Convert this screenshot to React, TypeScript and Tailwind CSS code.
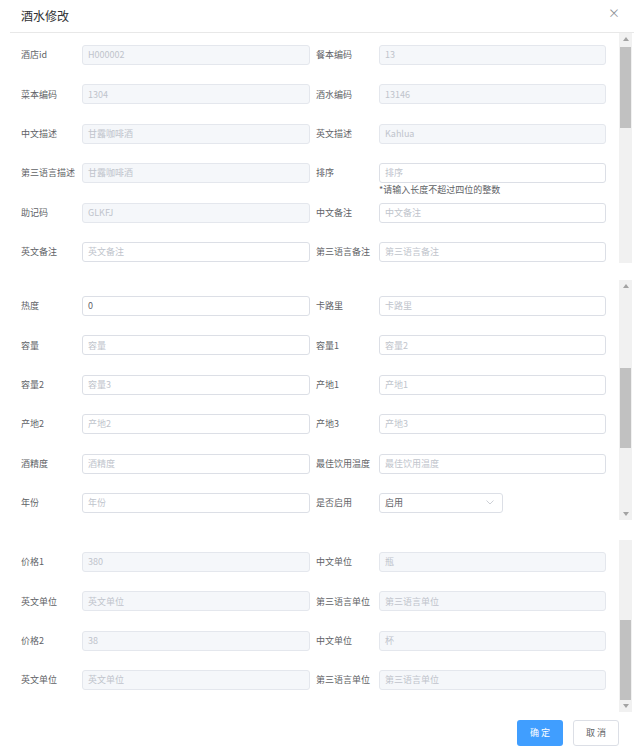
import React from 'react';

type Field = {
  label: string;
  value?: string;
  placeholder?: string;
  disabled?: boolean;
  hint?: string;
  select?: boolean;
};

const font = { fontFamily: '"Noto Sans CJK SC", "Noto Sans", sans-serif' };

const section1: [Field, Field][] = [
  [
    { label: '酒店id', value: 'H000002', disabled: true },
    { label: '餐本编码', value: '13', disabled: true },
  ],
  [
    { label: '菜本编码', value: '1304', disabled: true },
    { label: '酒水编码', value: '13146', disabled: true },
  ],
  [
    { label: '中文描述', value: '甘露咖啡酒', disabled: true },
    { label: '英文描述', value: 'Kahlua', disabled: true },
  ],
  [
    { label: '第三语言描述', value: '甘露咖啡酒', disabled: true },
    { label: '排序', placeholder: '排序', hint: '*请输入长度不超过四位的整数' },
  ],
  [
    { label: '助记码', value: 'GLKFJ', disabled: true },
    { label: '中文备注', placeholder: '中文备注' },
  ],
  [
    { label: '英文备注', placeholder: '英文备注' },
    { label: '第三语言备注', placeholder: '第三语言备注' },
  ],
];

const section2: [Field, Field][] = [
  [
    { label: '热度', value: '0' },
    { label: '卡路里', placeholder: '卡路里' },
  ],
  [
    { label: '容量', placeholder: '容量' },
    { label: '容量1', placeholder: '容量2' },
  ],
  [
    { label: '容量2', placeholder: '容量3' },
    { label: '产地1', placeholder: '产地1' },
  ],
  [
    { label: '产地2', placeholder: '产地2' },
    { label: '产地3', placeholder: '产地3' },
  ],
  [
    { label: '酒精度', placeholder: '酒精度' },
    { label: '最佳饮用温度', placeholder: '最佳饮用温度' },
  ],
  [
    { label: '年份', placeholder: '年份' },
    { label: '是否启用', value: '启用', select: true },
  ],
];

const section3: [Field, Field][] = [
  [
    { label: '价格1', value: '380', disabled: true },
    { label: '中文单位', value: '瓶', disabled: true },
  ],
  [
    { label: '英文单位', placeholder: '英文单位', disabled: true },
    { label: '第三语言单位', placeholder: '第三语言单位', disabled: true },
  ],
  [
    { label: '价格2', value: '38', disabled: true },
    { label: '中文单位', value: '杯', disabled: true },
  ],
  [
    { label: '英文单位', placeholder: '英文单位', disabled: true },
    { label: '第三语言单位', placeholder: '第三语言单位', disabled: true },
  ],
];

const Arrow = ({ down }: { down?: boolean }) => (
  <div className="h-[12px] flex items-center justify-center">
    <svg width="6" height="4" viewBox="0 0 6 4">
      {down ? <polygon points="0,0 6,0 3,4" fill="#a3a3a3" /> : <polygon points="0,4 6,4 3,0" fill="#a3a3a3" />}
    </svg>
  </div>
);

const Input = ({ f, wide }: { f: Field; wide?: boolean }) => {
  if (f.select) {
    return (
      <div className="w-[124px] h-[20px] border border-[#dcdfe6] rounded-[3px] bg-white flex items-center justify-between pl-[5px] pr-[8px] text-[9px] text-[#606266]">
        <span>{f.value}</span>
        <svg width="8" height="5" viewBox="0 0 8 5">
          <path d="M0.5 0.5 L4 4 L7.5 0.5" stroke="#c0c4cc" strokeWidth="0.8" fill="none" />
        </svg>
      </div>
    );
  }
  const text = f.value ?? f.placeholder;
  const dark = f.value !== undefined && !f.disabled;
  return (
    <div
      className={`${wide ? 'w-[228px]' : 'w-[227px]'} h-[20px] border rounded-[3px] flex items-center pl-[5px] text-[9px] ${
        f.disabled ? 'bg-[#f5f7fa] border-[#e4e7ed]' : 'bg-white border-[#dcdfe6]'
      } ${dark ? 'text-[#606266]' : 'text-[#c0c4cc]'}`}
    >
      {text}
    </div>
  );
};

const Row = ({ pair }: { pair: [Field, Field] }) => (
  <div className="h-[39.4px] flex items-start pl-[21px]">
    <div className="w-[61px] h-[20px] flex items-center text-[9px] text-[#606266]">{pair[0].label}</div>
    <Input f={pair[0]} wide />
    <div className="w-[63px] ml-[6px] h-[20px] flex items-center text-[9px] text-[#606266] whitespace-nowrap">
      {pair[1].label}
    </div>
    <div className="flex flex-col">
      <Input f={pair[1]} />
      {pair[1].hint && <div className="text-[9px] leading-[12px] mt-[1px] text-[#606266]">{pair[1].hint}</div>}
    </div>
  </div>
);

const Section = ({
  rows,
  height,
  pt,
  bar,
}: {
  rows: [Field, Field][];
  height: string;
  pt: string;
  bar: React.ReactNode;
}) => (
  <div className={`flex ${height}`}>
    <div className={`flex-1 overflow-hidden ${pt}`}>
      {rows.map((r, i) => (
        <Row key={i} pair={r} />
      ))}
    </div>
    <div className="w-[13px] mr-[2px] bg-[#f1f1f1] flex flex-col">{bar}</div>
  </div>
);

export default function App() {
  return (
    <div className="w-[634px] h-[753px] bg-white overflow-hidden" style={font}>
      {/* Header */}
      <div className="h-[32px] flex items-center justify-between pl-[21px] pr-[14px]">
        <span className="text-[12px] text-[#303133]">酒水修改</span>
        <span className="text-[12px] text-[#909399] -mt-[6px]">×</span>
      </div>
      <div className="ml-[10px] border-t border-[#e8e8e8]" />

      <Section
        rows={section1}
        height="h-[230px]"
        pt="pt-[12px]"
        bar={
          <>
            <Arrow />
            <div className="h-[2px]" />
            <div className="mx-[1px] h-[81px] bg-[#c1c1c1]" />
          </>
        }
      />

      <div className="h-[17px]" />

      <Section
        rows={section2}
        height="h-[240px]"
        pt="pt-[16px]"
        bar={
          <>
            <Arrow />
            <div className="h-[76px]" />
            <div className="mx-[1px] h-[80px] bg-[#c1c1c1]" />
            <div className="flex-1" />
            <Arrow down />
          </>
        }
      />

      <div className="h-[20px]" />

      <Section
        rows={section3}
        height="h-[172px]"
        pt="pt-[12px]"
        bar={
          <>
            <div className="h-[80px]" />
            <div className="mx-[1px] h-[80px] bg-[#c1c1c1]" />
            <Arrow down />
          </>
        }
      />

      {/* Footer */}
      <div className="flex justify-end gap-[10px] pt-[8px] pr-[15px]">
        <button className="w-[46px] h-[26px] rounded-[3px] bg-[#409eff] text-white text-[9px]">确 定</button>
        <button className="w-[46px] h-[26px] rounded-[3px] border border-[#dcdfe6] bg-white text-[#606266] text-[9px]">
          取 消
        </button>
      </div>
    </div>
  );
}
